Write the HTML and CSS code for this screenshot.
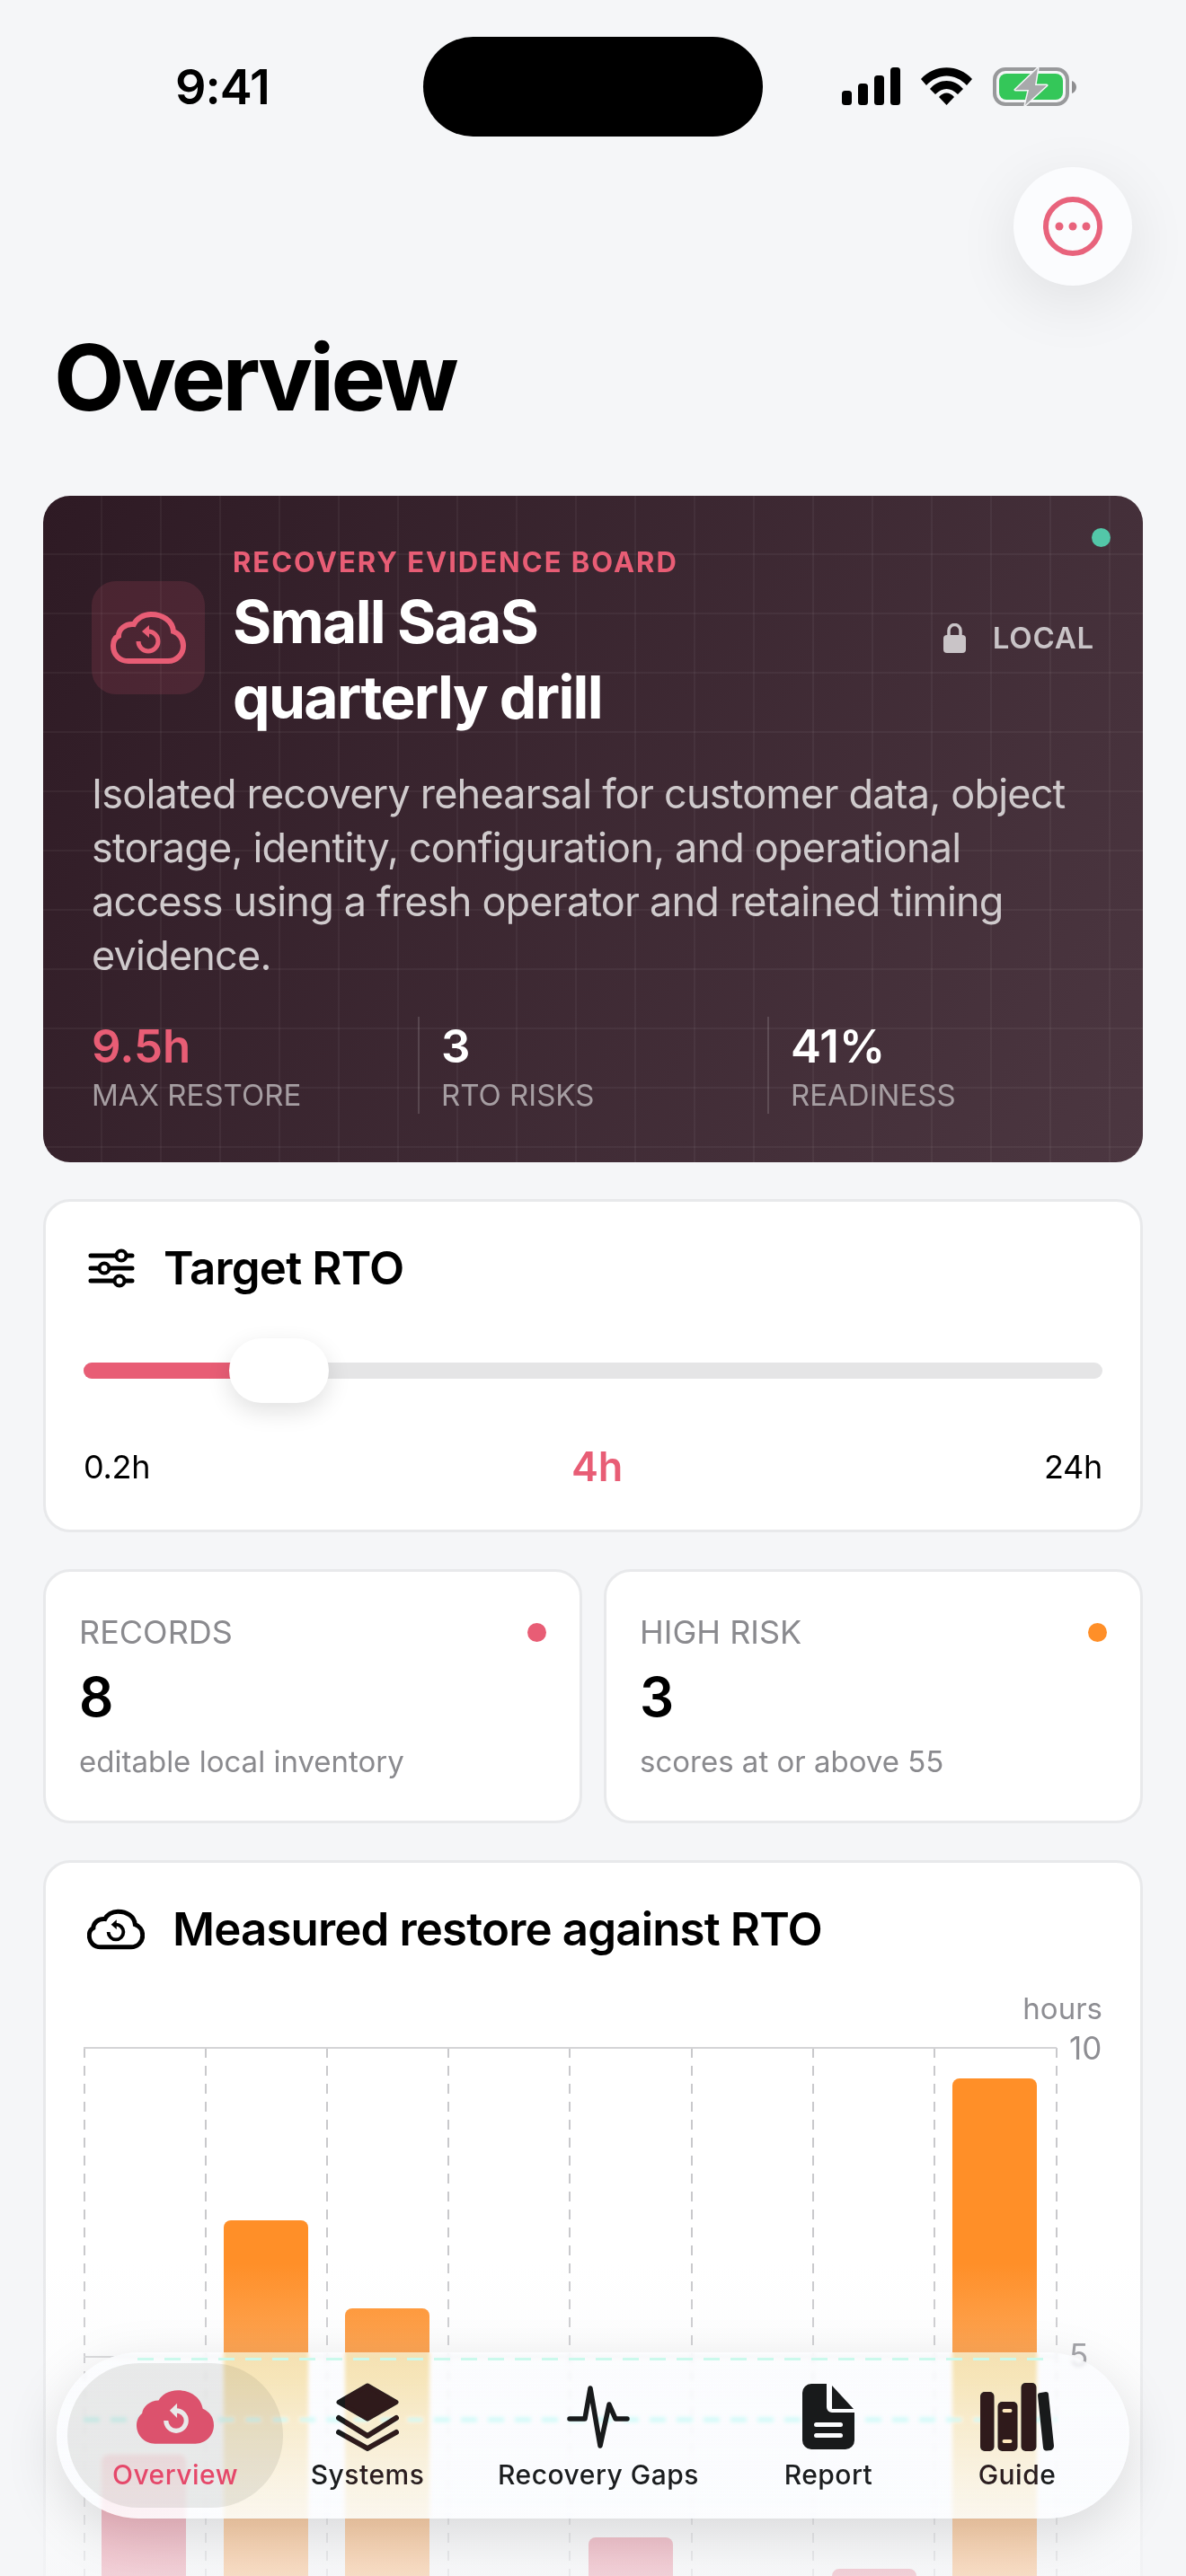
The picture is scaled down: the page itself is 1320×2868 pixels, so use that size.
FILE: index.html
```html
<!DOCTYPE html>
<html>
<head>
  <title>Recovery Evidence Board</title>
  <link rel="stylesheet" href="styles.css">
</head>
<body>
  <div class="screen">
    <div class="status-bar">
      <div class="status-time">9:41</div>
      <div class="island"></div>
      <div class="status-icons">
        <svg class="icon-signal" width="65" height="42" viewBox="0 0 65 42">
          <rect x="0" y="26" width="11" height="16" rx="3.5"/>
          <rect x="18" y="18" width="11" height="24" rx="3.5"/>
          <rect x="36" y="9" width="11" height="33" rx="3.5"/>
          <rect x="54" y="0" width="11" height="42" rx="3.5"/>
        </svg>
        <svg class="icon-wifi" width="57" height="42" viewBox="0 0 57 42">
          <path d="M0 13C15 -4 42 -4 57 13L51 20C38 6 19 6 6 20Z"/>
          <path d="M10 24C20 12 37 12 47 24L41 30C33 22 24 22 16 30Z"/>
          <path d="M20 33C25 27 32 27 37 33L28.5 42Z"/>
        </svg>
        <svg class="icon-battery" width="93" height="43" viewBox="0 0 93 43">
          <rect x="2" y="2" width="81" height="39" rx="12" fill="none" stroke="#98999b" stroke-width="4"/>
          <rect x="7" y="7" width="71" height="29" rx="8" fill="#34c759"/>
          <path d="M88 15C91 16 93 19 93 22C93 25 91 28 88 29Z" fill="#8e8e90"/>
          <path d="M50 1L25 25H40L36 42L60 20H47Z" fill="#a8a9ab" stroke="#f5f6f8" stroke-width="3" stroke-linejoin="round" paint-order="stroke"/>
        </svg>
      </div>
    </div>

    <div class="top-row">
      <button class="more-btn">
        <svg width="66" height="66" viewBox="0 0 66 66">
          <circle cx="33" cy="33" r="30" fill="none" stroke="#e8637c" stroke-width="6"/>
          <circle cx="18" cy="33" r="4.5" fill="#e8637c"/>
          <circle cx="33" cy="33" r="4.5" fill="#e8637c"/>
          <circle cx="48" cy="33" r="4.5" fill="#e8637c"/>
        </svg>
      </button>
    </div>

    <h1 class="page-title">Overview</h1>

    <div class="content">
      <section class="hero">
        <span class="hero-dot"></span>
        <div class="hero-head">
          <div class="hero-icon">
            <svg width="84" height="58" viewBox="0 0 84 58" fill="none" stroke="#e85d75">
              <path stroke-width="6" d="M20 55H64C74 55 81 47 81 38C81 30 76 24 70 22C69 10 58 3 45 3C36 3 29 8 26 14C16 13 9 20 9 27C5 29 3 33 3 38C3 48 10 55 20 55Z"/>
              <path stroke-width="5" d="M42 22A11 11 0 1 1 31 33"/>
              <path fill="#e85d75" stroke="none" d="M35 22L43 15V29Z"/>
            </svg>
          </div>
          <div class="hero-text">
            <div class="hero-eyebrow">RECOVERY EVIDENCE BOARD</div>
            <h2 class="hero-title">Small SaaS<br>quarterly drill</h2>
          </div>
          <div class="hero-local">
            <svg width="25" height="33" viewBox="0 0 25 33">
              <rect x="0" y="13" width="25" height="20" rx="4" fill="#c9c4c7"/>
              <path d="M6 14V8A6.5 6.5 0 0 1 19 8V14" fill="none" stroke="#c9c4c7" stroke-width="3.5"/>
            </svg>
            <span>LOCAL</span>
          </div>
        </div>
        <p class="hero-desc">Isolated recovery rehearsal for customer data, object storage, identity, configuration, and operational access using a fresh operator and retained timing evidence.</p>
        <div class="hero-stats">
          <div class="stat">
            <div class="stat-value pink">9.5h</div>
            <div class="stat-label">MAX RESTORE</div>
          </div>
          <div class="stat">
            <div class="stat-value">3</div>
            <div class="stat-label">RTO RISKS</div>
          </div>
          <div class="stat">
            <div class="stat-value">41%</div>
            <div class="stat-label">READINESS</div>
          </div>
        </div>
      </section>

      <section class="card target-card">
        <div class="card-head">
          <svg class="sliders-icon" width="52" height="44" viewBox="0 0 52 44" fill="#fff" stroke="#000">
            <path stroke-width="5" stroke-linecap="round" d="M3 8H31M43 8H49M3 22H12M24 22H49M3 36H29M41 36H49"/>
            <circle cx="37" cy="8" r="5.5" stroke-width="4"/>
            <circle cx="18" cy="22" r="5.5" stroke-width="4"/>
            <circle cx="35" cy="36" r="5.5" stroke-width="4"/>
          </svg>
          <h3>Target RTO</h3>
        </div>
        <div class="slider">
          <div class="slider-track">
            <div class="slider-fill" style="width: 15%"></div>
          </div>
          <div class="slider-thumb"></div>
        </div>
        <div class="slider-labels">
          <span>0.2h</span>
          <span class="slider-value">4h</span>
          <span>24h</span>
        </div>
      </section>

      <div class="metric-row">
        <section class="card metric">
          <div class="metric-top"><span>RECORDS</span><i class="metric-dot pink-bg"></i></div>
          <div class="metric-value">8</div>
          <div class="metric-sub">editable local inventory</div>
        </section>
        <section class="card metric">
          <div class="metric-top"><span>HIGH RISK</span><i class="metric-dot orange-bg"></i></div>
          <div class="metric-value">3</div>
          <div class="metric-sub">scores at or above 55</div>
        </section>
      </div>

      <section class="card chart-card">
        <div class="card-head chart-head">
          <svg width="64" height="46" viewBox="0 0 84 58" fill="none" stroke="#000">
            <path stroke-width="6.5" d="M20 55H64C74 55 81 47 81 38C81 30 76 24 70 22C69 10 58 3 45 3C36 3 29 8 26 14C16 13 9 20 9 27C5 29 3 33 3 38C3 48 10 55 20 55Z"/>
            <path stroke-width="5" d="M42 22A11 11 0 1 1 31 33"/>
            <path fill="#000" stroke="none" d="M35 22L43 15V29Z"/>
          </svg>
          <h3>Measured restore against RTO</h3>
        </div>
        <svg class="chart" width="1134" height="760" viewBox="0 0 1134 760">
          <text class="axis axis-unit" x="1134" y="33" text-anchor="end">hours</text>
          <g class="grid-v">
            <line x1="1" y1="65" x2="1" y2="760"/>
            <line x1="136" y1="65" x2="136" y2="760"/>
            <line x1="271" y1="65" x2="271" y2="760"/>
            <line x1="406" y1="65" x2="406" y2="760"/>
            <line x1="541" y1="65" x2="541" y2="760"/>
            <line x1="677" y1="65" x2="677" y2="760"/>
            <line x1="812" y1="65" x2="812" y2="760"/>
            <line x1="947" y1="65" x2="947" y2="760"/>
            <line x1="1083" y1="65" x2="1083" y2="760"/>
          </g>
          <g class="grid-h">
            <line x1="0" y1="65" x2="1083" y2="65"/>
            <line x1="0" y1="409" x2="1083" y2="409"/>
          </g>
          <text class="axis" x="1097" y="78">10</text>
          <text class="axis" x="1097" y="420">5</text>
          <rect class="bar-ok" x="20" y="518" width="94" height="260" rx="8"/>
          <rect class="bar-late" x="156" y="257" width="94" height="520" rx="8"/>
          <rect class="bar-late" x="291" y="355" width="94" height="420" rx="8"/>
          <rect class="bar-ok" x="562" y="610" width="94" height="160" rx="8"/>
          <rect class="bar-ok" x="833" y="645" width="94" height="130" rx="8"/>
          <rect class="bar-late" x="967" y="99" width="94" height="680" rx="8"/>
          <line class="rto-line" x1="0" y1="479" x2="1083" y2="479"/>
        </svg>
      </section>
    </div>

    <div class="bottom-fade"></div>

    <nav class="tabbar">
      <div class="tabbar-glass"></div>
      <div class="tabbar-refract"></div>
      <div class="tabbar-items">
        <div class="tab active">
          <div class="tab-icon">
            <svg width="86" height="60" viewBox="0 0 84 58">
              <path fill="#dc526d" d="M20 58H64C75 58 84 49 84 38C84 29 79 23 72 20C70 8 59 0 45 0C35 0 27 5 24 11C14 11 7 18 6 25C2 28 0 33 0 38C0 49 9 58 20 58Z"/>
              <path fill="none" stroke="#e9eaea" stroke-width="5" d="M43 22A11 11 0 1 1 32 33"/>
              <path fill="#e9eaea" d="M36 22L44 14V30Z"/>
            </svg>
          </div>
          <span>Overview</span>
        </div>
        <div class="tab">
          <div class="tab-icon">
            <svg width="70" height="76" viewBox="0 0 70 76" fill="none" stroke="#181a1b" stroke-linejoin="round" stroke-linecap="round">
              <path fill="#181a1b" stroke-width="5" d="M35 3L67 21.500L35 40L3 21.500Z"/>
              <path stroke-width="6" d="M3 39L35 59L67 39"/>
              <path stroke-width="6" d="M3 55L35 73L67 55"/>
            </svg>
          </div>
          <span>Systems</span>
        </div>
        <div class="tab">
          <div class="tab-icon">
            <svg width="70" height="72" viewBox="0 0 70 72" fill="none" stroke="#181a1b" stroke-width="5.500" stroke-linejoin="round" stroke-linecap="round">
              <path d="M3 38H20L26 4L37 68L47 22L54 38H67"/>
            </svg>
          </div>
          <span>Recovery Gaps</span>
        </div>
        <div class="tab">
          <div class="tab-icon">
            <svg width="58" height="74" viewBox="0 0 58 74">
              <path fill="#181a1b" d="M10 0H27V26A6 6 0 0 0 33 32H58V63A10 10 0 0 1 48 73H10A10 10 0 0 1 0 63V10A10 10 0 0 1 10 0Z"/>
              <path fill="#181a1b" d="M33 2L57 28H33Z"/>
              <rect x="13" y="43" width="32" height="5" rx="2.500" fill="#fbfcfe"/>
              <rect x="13" y="55" width="32" height="5" rx="2.500" fill="#fbfcfe"/>
            </svg>
          </div>
          <span>Report</span>
        </div>
        <div class="tab">
          <div class="tab-icon">
            <svg width="82" height="76" viewBox="0 0 82 76" fill="#181a1b">
              <rect x="0" y="10" width="15.500" height="66" rx="5"/>
              <rect x="19.500" y="21" width="22" height="55" rx="5"/>
              <rect x="24.500" y="29" width="11" height="4" rx="2" fill="#ffe7bd"/>
              <rect x="24.500" y="63" width="11" height="4" rx="2" fill="#ffe7bd"/>
              <rect x="45.500" y="0" width="17" height="76" rx="5"/>
              <path d="M67 11L73 10C75 10 76 11 76 13L82 70C82 72 81 74 79 75L74 75.500C72 76 70 74 70 72L64 14C64 12 65 11 67 11Z"/>
            </svg>
          </div>
          <span>Guide</span>
        </div>
      </div>
      <div class="tabbar-tint"></div>
    </nav>
  </div>
</body>
</html>
```

FILE: styles.css
```css
* {
  margin: 0;
  padding: 0;
  box-sizing: border-box;
}

html, body {
  width: 1320px;
  height: 2868px;
  overflow: hidden;
  background: #f5f6f8;
}

body {
  font-family: 'Inter', 'Liberation Sans', sans-serif;
  color: #000;
}

.screen {
  position: relative;
  width: 1320px;
  height: 2868px;
  overflow: hidden;
  background: #f5f6f8;
}

/* Status bar */
.status-bar {
  display: grid;
  grid-template-columns: 471px 378px 1fr;
  align-items: center;
  height: 111px;
  margin-top: 41px;
}

.status-time {
  padding-left: 195px;
  font-size: 54px;
  font-weight: 600;
  line-height: 60px;
  letter-spacing: -1px;
}

.island {
  height: 111px;
  background: #000;
  border-radius: 56px;
}

.status-icons {
  display: flex;
  align-items: flex-start;
  padding-left: 88px;
}

.icon-wifi {
  margin-left: 23px;
}

.icon-battery {
  margin-left: 23px;
}

/* Header */
.top-row {
  display: flex;
  justify-content: flex-end;
  padding: 34px 60px 0 0;
}

.more-btn {
  display: flex;
  align-items: center;
  justify-content: center;
  width: 132px;
  height: 132px;
  border: none;
  border-radius: 50%;
  background: #fbfcfe;
  box-shadow: 0 18px 70px rgba(0, 0, 0, 0.09);
}

.page-title {
  padding: 42px 0 72px 60px;
  font-size: 102px;
  font-weight: 700;
  line-height: 120px;
  letter-spacing: -3.7px;
}

.content {
  display: flex;
  flex-direction: column;
  gap: 41px;
  padding: 0 48px;
}

/* Hero card */
.hero {
  position: relative;
  padding: 54px;
  border-radius: 30px;
  color: #fff;
  background:
    linear-gradient(90deg, transparent 64px, rgba(255, 255, 255, 0.045) 64px, rgba(255, 255, 255, 0.045) 66px),
    linear-gradient(180deg, transparent 64px, rgba(255, 255, 255, 0.045) 64px, rgba(255, 255, 255, 0.045) 66px),
    linear-gradient(120deg, #2e1a24 0%, #4c3741 100%);
  background-size: 66px 66px, 66px 66px, 100% 100%;
}

.hero-dot {
  position: absolute;
  top: 36px;
  right: 36px;
  width: 21px;
  height: 21px;
  border-radius: 50%;
  background: #53c7a8;
}

.hero-head {
  display: flex;
  align-items: center;
  gap: 31px;
}

.hero-icon {
  display: flex;
  align-items: center;
  justify-content: center;
  flex-shrink: 0;
  width: 126px;
  height: 126px;
  margin-bottom: 4px;
  border-radius: 27px;
  background: rgba(232, 93, 117, 0.14);
}

.hero-text {
  flex: 1;
}

.hero-eyebrow {
  margin-bottom: 4px;
  font-size: 31px;
  font-weight: 700;
  line-height: 40px;
  letter-spacing: 2px;
  color: #e85d75;
}

.hero-title {
  font-size: 66px;
  font-weight: 700;
  line-height: 84px;
  letter-spacing: -1.7px;
}

.hero-local {
  display: flex;
  align-items: center;
  gap: 30px;
  margin-bottom: 4px;
  font-size: 33px;
  font-weight: 600;
  letter-spacing: 0.8px;
  color: #c9c4c7;
}

.hero-desc {
  margin-top: 36px;
  font-size: 45px;
  line-height: 60px;
  letter-spacing: -0.8px;
  color: #cfcacc;
}

.hero-stats {
  display: grid;
  grid-template-columns: 363px 389px 1fr;
  margin-top: 38px;
}

.stat + .stat {
  padding-left: 24px;
  border-left: 2px solid rgba(255, 255, 255, 0.14);
}

.stat-value {
  font-size: 51px;
  font-weight: 600;
  line-height: 66px;
}

.stat-label {
  font-size: 33px;
  line-height: 42px;
  color: #a69ea2;
}

.pink {
  color: #e85d75;
}

/* White cards */
.card {
  background: #fff;
  border: 3px solid #e8e9eb;
  border-radius: 30px;
}

.card-head {
  display: flex;
  align-items: center;
  gap: 32px;
  height: 60px;
}

.card-head h3 {
  font-size: 51px;
  font-weight: 600;
  line-height: 60px;
  letter-spacing: -0.85px;
}

.target-card {
  padding: 44px 42px 46px;
}

.sliders-icon {
  margin-left: 5px;
}

.slider {
  position: relative;
  display: flex;
  align-items: center;
  height: 72px;
  margin-top: 48px;
}

.slider-track {
  width: 100%;
  height: 18px;
  border-radius: 9px;
  overflow: hidden;
  background: #e5e5e6;
}

.slider-fill {
  height: 100%;
  background: #e85d75;
}

.slider-thumb {
  position: absolute;
  left: 162px;
  top: 0;
  width: 111px;
  height: 72px;
  border-radius: 36px;
  background: #fff;
  box-shadow: 0 9px 27px rgba(0, 0, 0, 0.12);
}

.slider-labels {
  display: flex;
  align-items: center;
  justify-content: space-between;
  margin-top: 47px;
  font-size: 36px;
  line-height: 48px;
  letter-spacing: -0.3px;
}

.slider-value {
  font-size: 45px;
  font-weight: 600;
  color: #e85d75;
}

.metric-row {
  display: grid;
  grid-template-columns: 1fr 1fr;
  gap: 24px;
}

.metric {
  height: 283px;
  padding: 46px 37px 0;
}

.metric-top {
  display: flex;
  align-items: center;
  justify-content: space-between;
  font-size: 36px;
  line-height: 42px;
  color: #8a8a8e;
}

.metric-dot {
  width: 21px;
  height: 21px;
  border-radius: 50%;
}

.pink-bg {
  background: #e85d75;
}

.orange-bg {
  background: #ff8f28;
}

.metric-value {
  margin-top: 15px;
  font-size: 60px;
  font-weight: 600;
  line-height: 72px;
}

.metric-sub {
  margin-top: 15px;
  font-size: 33px;
  line-height: 42px;
  color: #8a8a8e;
}

/* Chart */
.chart-card {
  height: 900px;
  padding: 44px 42px 0;
}

.chart-head {
  gap: 31px;
}

.chart-head svg {
  margin-left: 4px;
}

.chart {
  display: block;
  margin-top: 37px;
}

.axis {
  font-family: 'Inter', sans-serif;
  font-size: 35px;
  fill: #8e8e93;
}

.axis-unit {
  font-size: 33px;
}

.grid-v line {
  stroke: #c9c9cc;
  stroke-width: 2;
  stroke-dasharray: 11 9;
}

.grid-h line {
  stroke: #d4d4d6;
  stroke-width: 2;
}

.bar-ok {
  fill: #e85d75;
}

.bar-late {
  fill: #ff8f28;
}

.rto-line {
  stroke: #3fd4b4;
  stroke-width: 5;
  stroke-dasharray: 18 12;
}

.bottom-fade {
  position: absolute;
  left: 0;
  right: 0;
  bottom: 0;
  height: 348px;
  background: linear-gradient(to bottom, rgba(245, 246, 248, 0), rgba(245, 246, 248, 0.76));
}

/* Floating tab bar */
.tabbar {
  position: absolute;
  left: 63px;
  top: 2619px;
  width: 1194px;
  height: 185px;
}

.tabbar-glass {
  position: absolute;
  inset: 0;
  border-radius: 92px;
  background: linear-gradient(to bottom, rgba(251, 252, 254, 0.7), rgba(251, 252, 254, 0.88));
  backdrop-filter: blur(2px) saturate(2) hue-rotate(8deg);
  box-shadow: 0 18px 60px rgba(0, 0, 0, 0.13);
}

.tabbar-refract {
  position: absolute;
  left: 90px;
  right: 90px;
  top: 6px;
  height: 3px;
  background: repeating-linear-gradient(90deg, #cbf9ec 0, #cbf9ec 18px, transparent 18px, transparent 30px);
}

.tabbar-items {
  position: absolute;
  inset: 12px 8px 12px 12px;
  display: grid;
  grid-template-columns: 240px 188px 326px 186px 1fr;
}

.tab {
  display: flex;
  flex-direction: column;
  align-items: center;
  padding-top: 22px;
  font-size: 30px;
  font-weight: 500;
  line-height: 44px;
  letter-spacing: 0.5px;
  color: #1b1d1f;
}

.tab.active {
  border-radius: 80px;
  background: rgba(100, 100, 80, 0.12);
  color: #e5486a;
}

.tab-icon {
  display: flex;
  align-items: center;
  justify-content: center;
  height: 76px;
  margin-bottom: 4px;
}

.tabbar-tint {
  position: absolute;
  left: 0;
  top: 0;
  width: 1194px;
  height: 185px;
  pointer-events: none;
  mix-blend-mode: lighten;
  background: linear-gradient(90deg,
    #000 186px, #2f1800 186px, #2f1800 280px,
    #000 280px, #000 321px, #2f1800 321px, #2f1800 415px,
    #000 415px, #000 997px, #2f1800 997px, #2f1800 1092px,
    #000 1092px);
}
```
